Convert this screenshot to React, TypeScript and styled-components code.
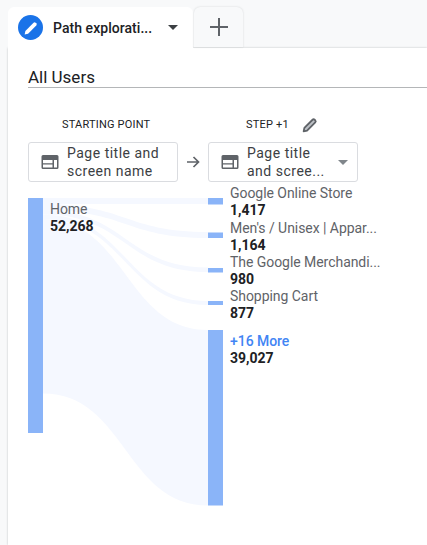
import React from "react";
import styled, { createGlobalStyle } from "styled-components";

const Global = createGlobalStyle`
  html, body { margin: 0; padding: 0; width: 427px; height: 545px; overflow: hidden; background: #f8f9fa; }
  body { font-family: Roboto, "Liberation Sans", sans-serif; color: #202124; }
`;

const Page = styled.div`
  width: 427px;
  height: 545px;
  padding: 7px 0 0 8px;
  box-sizing: border-box;
  display: flex;
  flex-direction: column;
  overflow: hidden;
`;
const TabBar = styled.div`
  display: flex;
  gap: 1px;
  height: 41px;
  flex: none;
  position: relative;
  z-index: 1;
`;
const ActiveTab = styled.div`
  width: 185px;
  height: 41px;
  box-sizing: border-box;
  background: #fff;
  border-radius: 6px 6px 0 0;
  display: flex;
  align-items: center;
  padding: 0 0 0 10px;
`;
const TabBadge = styled.div`
  width: 25px;
  height: 25px;
  border-radius: 50%;
  background: #1a73e8;
  display: flex;
  align-items: center;
  justify-content: center;
  flex: none;
`;
const TabTitle = styled.span`
  font-size: 14px;
  font-weight: 500;
  letter-spacing: 0.05px;
  margin-left: 10px;
  width: 105px;
  white-space: nowrap;
  color: #202124;
`;
const Caret = styled.span<{ $color: string }>`
  width: 0;
  height: 0;
  border-left: 5px solid transparent;
  border-right: 5px solid transparent;
  border-top: 5px solid ${(p) => p.$color};
  flex: none;
`;
const TabCaretSlot = styled.span`
  margin-left: 10px;
  display: flex;
`;
const AddTab = styled.div`
  width: 49px;
  height: 40px;
  box-sizing: border-box;
  background: #f8f9fa;
  border-radius: 6px 6px 0 0;
  box-shadow: 0 0 2px rgba(60, 64, 67, 0.2);
  display: flex;
  align-items: center;
  justify-content: center;
`;
const Panel = styled.div`
  flex: 1;
  background: #fff;
  box-shadow: 0 0 2px rgba(60, 64, 67, 0.3);
  padding: 0 0 0 20px;
  min-width: 0;
`;
const SegmentName = styled.div`
  margin-top: 20px;
  height: 19px;
  width: 420px;
  border-bottom: 1px solid #b4b6b8;
  font-size: 17px;
  line-height: 19px;
  color: #202124;
`;
const Columns = styled.div`
  display: flex;
  align-items: flex-start;
  margin-top: 27px;
`;
const StartColumn = styled.div`
  width: 150px;
  display: flex;
  flex-direction: column;
`;
const StepColumn = styled.div`
  width: 150px;
  display: flex;
  flex-direction: column;
`;
const ColumnHead = styled.div<{ $indent: number }>`
  height: 27px;
  padding-left: ${(p) => p.$indent}px;
  display: flex;
  align-items: flex-start;
  font-size: 11px;
  font-weight: 400;
  line-height: 19px;
  letter-spacing: 0.2px;
  color: #202124;
`;
const PencilSlot = styled.span`
  margin-left: 12px;
  display: flex;
  margin-top: 1px;
`;
const DimensionChip = styled.div`
  height: 40px;
  box-sizing: border-box;
  border: 1px solid #dadce0;
  border-radius: 3px;
  display: flex;
  align-items: center;
  padding-left: 12px;
  position: relative;
  background: #fff;
`;
const ChipLabel = styled.div`
  margin-left: 8px;
  font-size: 14px;
  line-height: 18px;
  letter-spacing: 0.5px;
  color: #3c4043;
  white-space: nowrap;
`;
const ChipCaret = styled.span`
  margin-left: auto;
  margin-right: 9px;
  display: flex;
`;
const ArrowSlot = styled.div`
  width: 30px;
  flex: none;
  margin-top: 27px;
  height: 40px;
  display: flex;
  align-items: center;
  justify-content: center;
`;
const Chart = styled.div`
  position: relative;
  width: 399px;
  height: 320px;
  margin-top: 16px;
`;
const ChartSvg = styled.svg`
  position: absolute;
  left: 0;
  top: 0;
  display: block;
`;
const NodeLabel = styled.div<{ $x: number; $y: number }>`
  position: absolute;
  left: ${(p) => p.$x}px;
  top: ${(p) => p.$y}px;
  font-size: 14px;
  line-height: 17px;
  white-space: nowrap;
`;
const NodeName = styled.div<{ $accent?: boolean }>`
  color: ${(p) => (p.$accent ? "#4285f4" : "#5f6368")};
  font-weight: ${(p) => (p.$accent ? 500 : 400)};
  letter-spacing: -0.05px;
`;
const NodeValue = styled.div`
  color: #202124;
  font-weight: 700;
`;

const SlimPencil =
  "M3.5 20.5l1-4.6L15.4 5a2 2 0 0 1 2.8 0l.8.8a2 2 0 0 1 0 2.8L8.1 19.5z";

const PencilIcon = ({ size, color }: { size: number; color: string }) => (
  <svg width={size} height={size} viewBox="0 0 24 24" aria-hidden="true">
    <path fill={color} d={SlimPencil} />
  </svg>
);

const OutlinePencil = () => (
  <svg width="18" height="18" viewBox="0 0 24 24" aria-hidden="true">
    <path fill="#bdc1c6" stroke="#5f6368" strokeWidth="2.4" strokeLinejoin="round" d={SlimPencil} />
  </svg>
);

const TableIcon = () => (
  <svg width="18" height="16" viewBox="0 0 18 16" aria-hidden="true">
    <path
      fill="#5f6368"
      fillRule="evenodd"
      d="M2 1h14a1.5 1.5 0 0 1 1.5 1.5v11A1.5 1.5 0 0 1 16 15H2a1.5 1.5 0 0 1-1.5-1.5v-11A1.5 1.5 0 0 1 2 1zM2 6v3.2h9.5V6H2zm11 0v7.5h3V6h-3zM2 10.5v3h9.5v-3H2z"
    />
  </svg>
);

const PlusIcon = () => (
  <svg width="18" height="18" viewBox="0 0 18 18" aria-hidden="true">
    <path fill="#5f6368" d="M8 0h2v8h8v2h-8v8H8v-8H0V8h8z" />
  </svg>
);

const ArrowIcon = () => (
  <svg width="14" height="14" viewBox="0 0 14 14" aria-hidden="true">
    <path fill="none" stroke="#5f6368" strokeWidth="1.7" d="M1 7h11M7.5 2l5 5-5 5" />
  </svg>
);

type Flow = { l0: number; l1: number; r0: number; r1: number };

// y values measured from the chart's top (page y 198).
const flows: Flow[] = [
  { l0: 0, l1: 6, r0: 0, r1: 6 },
  { l0: 6, l1: 12, r0: 34, r1: 40 },
  { l0: 12, l1: 16.5, r0: 69.5, r1: 74 },
  { l0: 16.5, l1: 21, r0: 103, r1: 107 },
  { l0: 21, l1: 195.5, r0: 132, r1: 307.5 },
];

const flowPath = ({ l0, l1, r0, r1 }: Flow) => {
  const a = 15;
  const b = 180;
  const m = (a + b) / 2;
  return `M${a} ${l0}C${m} ${l0} ${m} ${r0} ${b} ${r0}L${b} ${r1}C${m} ${r1} ${m} ${l1} ${a} ${l1}Z`;
};

const rightBars = [
  { y: 0, h: 6.5 },
  { y: 34.5, h: 5.5 },
  { y: 70, h: 4.5 },
  { y: 103, h: 4 },
  { y: 132, h: 175.5 },
];

const nodes = [
  { name: "Google Online Store", value: "1,417", y: -13 },
  { name: "Men's / Unisex | Appar...", value: "1,164", y: 22 },
  { name: "The Google Merchandi...", value: "980", y: 56 },
  { name: "Shopping Cart", value: "877", y: 90 },
  { name: "+16 More", value: "39,027", y: 135, accent: true },
];

export default function App() {
  return (
    <Page>
      <Global />
      <TabBar>
        <ActiveTab>
          <TabBadge>
            <PencilIcon size={18} color="#ffffff" />
          </TabBadge>
          <TabTitle>Path explorati...</TabTitle>
          <TabCaretSlot>
            <Caret $color="#3c4043" />
          </TabCaretSlot>
        </ActiveTab>
        <AddTab>
          <PlusIcon />
        </AddTab>
      </TabBar>
      <Panel>
        <SegmentName>All Users</SegmentName>
        <Columns>
          <StartColumn>
            <ColumnHead $indent={34}>STARTING POINT</ColumnHead>
            <DimensionChip>
              <TableIcon />
              <ChipLabel>
                Page title and
                <br />
                screen name
              </ChipLabel>
            </DimensionChip>
          </StartColumn>
          <ArrowSlot>
            <ArrowIcon />
          </ArrowSlot>
          <StepColumn>
            <ColumnHead $indent={38}>
              STEP +1
              <PencilSlot>
                <OutlinePencil />
              </PencilSlot>
            </ColumnHead>
            <DimensionChip>
              <TableIcon />
              <ChipLabel>
                Page title
                <br />
                and scree...
              </ChipLabel>
              <ChipCaret>
                <Caret $color="#80868b" />
              </ChipCaret>
            </DimensionChip>
          </StepColumn>
        </Columns>
        <Chart>
          <ChartSvg width="399" height="320" viewBox="0 0 399 320">
            {flows.map((f, i) => (
              <path key={i} d={flowPath(f)} fill="#f5f8ff" />
            ))}
            <rect x="0" y="0" width="15" height="235" fill="#8ab4f8" />
            {rightBars.map((b, i) => (
              <rect key={i} x="180" y={b.y} width="15" height={b.h} fill="#8ab4f8" />
            ))}
          </ChartSvg>
          <NodeLabel $x={22} $y={3}>
            <NodeName>Home</NodeName>
            <NodeValue>52,268</NodeValue>
          </NodeLabel>
          {nodes.map((n) => (
            <NodeLabel key={n.name} $x={202} $y={n.y}>
              <NodeName $accent={n.accent}>{n.name}</NodeName>
              <NodeValue>{n.value}</NodeValue>
            </NodeLabel>
          ))}
        </Chart>
      </Panel>
    </Page>
  );
}
